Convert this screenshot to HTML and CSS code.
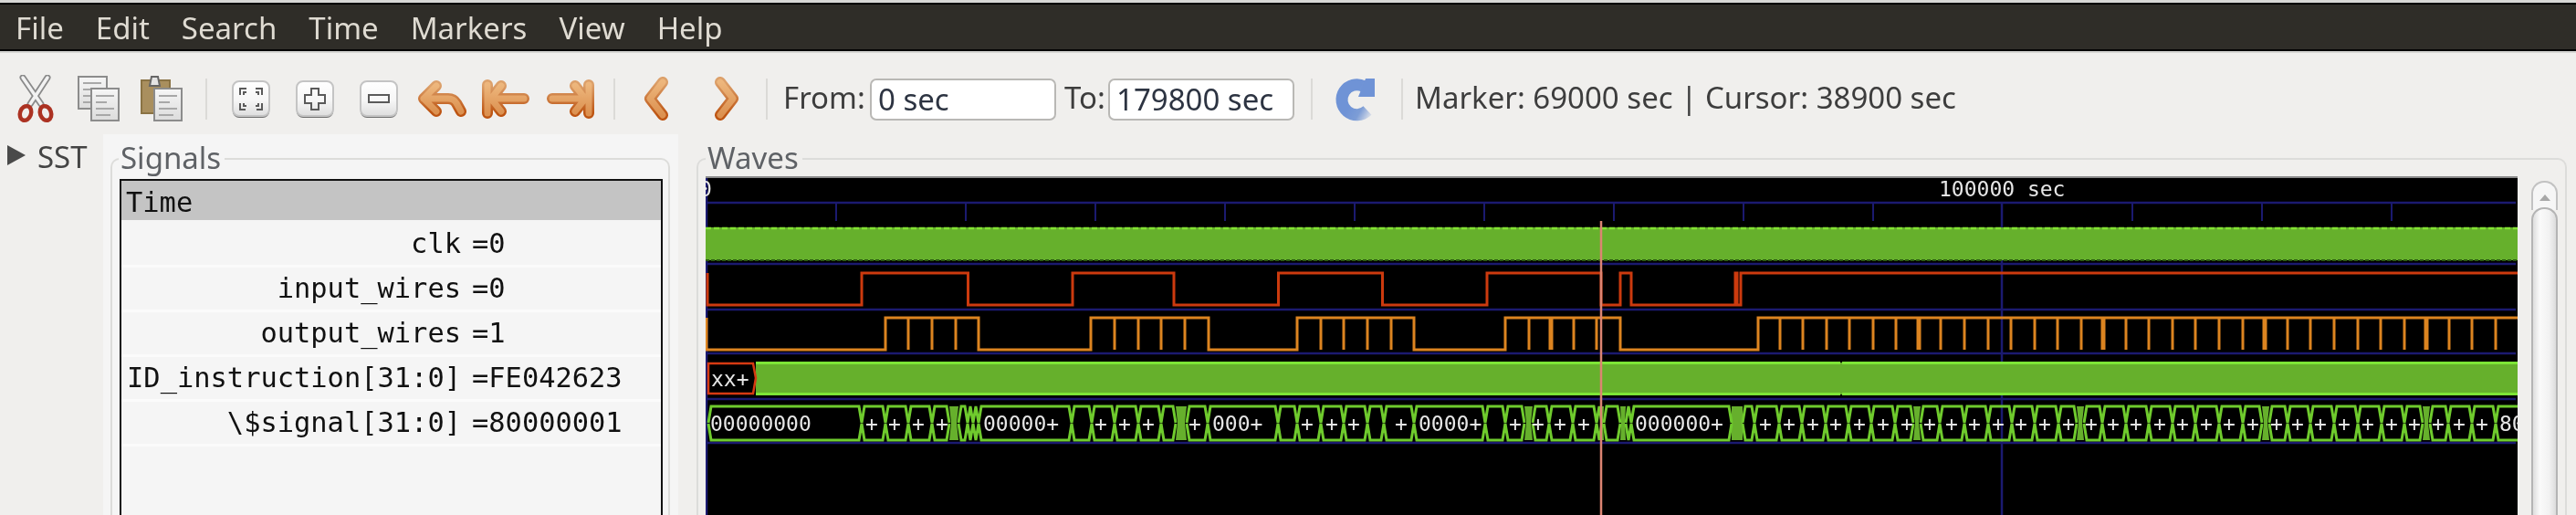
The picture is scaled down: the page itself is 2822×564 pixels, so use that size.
FILE: index.html
```html
<!DOCTYPE html>
<html lang="en">
<head>
<meta charset="utf-8">
<title>GTKWave</title>
<link rel="stylesheet" href="styles.css">
</head>
<body>
<div class="app">
  <nav class="menubar">
    <span>File</span><span>Edit</span><span>Search</span><span>Time</span><span>Markers</span><span>View</span><span>Help</span>
  </nav>

  <svg class="defs" width="0" height="0" aria-hidden="true">
    <defs>
      <linearGradient id="btn" x1="0" y1="0" x2="0" y2="1"><stop offset="0" stop-color="#ffffff"/><stop offset=".55" stop-color="#f6f6f6"/><stop offset="1" stop-color="#dedede"/></linearGradient>
      <linearGradient id="sheet" x1="0" y1="0" x2="0" y2="1"><stop offset="0" stop-color="#f6f6f6"/><stop offset="1" stop-color="#dcdcdc"/></linearGradient>
      <linearGradient id="org" x1="0" y1="0" x2="0" y2="1"><stop offset="0" stop-color="#edb67c"/><stop offset="1" stop-color="#dc9150"/></linearGradient>
      <linearGradient id="orgEdge" x1="0" y1="0" x2="0" y2="1"><stop offset="0" stop-color="#dca06a"/><stop offset="1" stop-color="#bd5412"/></linearGradient>
      <linearGradient id="blue" gradientUnits="userSpaceOnUse" x1="1478" y1="116" x2="1503" y2="130"><stop offset="0" stop-color="#6f93d6"/><stop offset=".45" stop-color="#7d9dd6"/><stop offset="1" stop-color="#f0efed"/></linearGradient>
    </defs>
  </svg>

  <div class="toolbar">
    <span class="tool"><svg width="42" height="53" viewBox="18 81 42 53">
      <path class="blade-o" d="M25,84 L45,113 M52,84 L33,113"/><path class="blade-i" d="M25,84 L45,113 M52,84 L33,113"/>
      <ellipse class="ring" cx="28" cy="123" rx="6" ry="8" transform="rotate(20 28 123)"/><ellipse class="ring" cx="50" cy="123" rx="6" ry="8" transform="rotate(-20 50 123)"/>
    </svg></span>
    <span class="tool"><svg width="48" height="53" viewBox="83 81 48 53">
      <rect class="paper" x="85" y="83" width="31" height="35"/><path class="ruled" d="M90,90H110M90,97H102M90,104H98M90,111H98"/>
      <rect class="paper" x="99" y="96" width="30" height="35"/><path class="ruled" d="M104,104H124M104,111H116M104,118H124M104,125H120"/>
    </svg></span>
    <span class="tool"><svg width="48" height="53" viewBox="153 81 48 53">
      <rect class="board" x="155" y="87" width="31" height="36"/>
      <path class="clip" d="M166,83H173L175,93H164Z"/>
      <rect class="paper" x="169" y="96" width="30" height="35"/><path class="ruled" d="M174,104H194M174,111H186M174,118H194M174,125H190"/>
    </svg></span>
    <span class="sep first"></span>
    <span class="tool wide"><svg width="44" height="44" viewBox="253 86 44 44">
      <rect class="btn-shadow" x="255" y="90" width="40" height="38" rx="7"/><rect class="btn" x="255" y="88" width="40" height="38" rx="7"/>
      <path class="glyph" d="M263,103V96H270M280,96H287V103M263,112V119H269M281,119H287V112M267,103V100H270M283,103V100H280M267,112V115H270M283,112V115H280"/>
    </svg></span>
    <span class="tool wide"><svg width="44" height="44" viewBox="323 86 44 44">
      <rect class="btn-shadow" x="325" y="90" width="40" height="38" rx="7"/><rect class="btn" x="325" y="88" width="40" height="38" rx="7"/>
      <path class="glyph" d="M341,96H349V103H356V112H349V119H341V112H334V103H341Z"/>
    </svg></span>
    <span class="tool wide"><svg width="44" height="44" viewBox="393 86 44 44">
      <rect class="btn-shadow" x="395" y="90" width="40" height="38" rx="7"/><rect class="btn" x="395" y="88" width="40" height="38" rx="7"/>
      <path class="glyph" d="M404,103H426V111H404Z"/>
    </svg></span>
    <span class="tool wide"><svg width="56" height="46" viewBox="457 85 56 46">
      <path class="arr-o" d="M478,93 L464,107 L478,121 M464,107 H491 Q497,107 500,112 L505,121"/><path class="arr-i" d="M478,93 L464,107 L478,121 M464,107 H491 Q497,107 500,112 L505,121"/>
    </svg></span>
    <span class="tool wide"><svg width="56" height="46" viewBox="527 85 56 46">
      <path class="arr-o" d="M534,92V123 M549,93 L538,107 L549,121 M538,107H574"/><path class="arr-i" d="M534,92V123 M549,93 L538,107 L549,121 M538,107H574"/>
    </svg></span>
    <span class="tool wide"><svg width="56" height="46" viewBox="597 85 56 46">
      <path class="arr-o" d="M645,92V123 M630,93 L641,107 L630,121 M641,107H605"/><path class="arr-i" d="M645,92V123 M630,93 L641,107 L630,121 M641,107H605"/>
    </svg></span>
    <span class="sep second"></span>
    <span class="tool nav"><svg width="32" height="50" viewBox="702 83 32 50">
      <path class="arr-o" d="M725,89 L711,107 L725,125"/><path class="arr-i" d="M725,89 L711,107 L725,125"/>
    </svg></span>
    <span class="tool nav"><svg width="32" height="50" viewBox="780 83 32 50">
      <path class="arr-o" d="M789,89 L803,107 L789,125"/><path class="arr-i" d="M789,89 L803,107 L789,125"/>
    </svg></span>
    <span class="sep third"></span>
    <label class="lbl from">From:</label>
    <span class="field">0 sec</span>
    <label class="lbl to">To:</label>
    <span class="field">179800 sec</span>
    <span class="sep fourth"></span>
    <span class="tool reload"><svg width="48" height="50" viewBox="1460 85 48 50">
      <path class="rel-arc" d="M1497,122 A16.500,16.500 0 1 1 1493,95.500"/>
      <path class="rel-head" d="M1495,87 H1505 V107 H1487 Z"/>
    </svg></span>
    <span class="sep fifth"></span>
    <span class="status">Marker: 69000 sec | Cursor: 38900 sec</span>
  </div>

  <main class="main">
    <aside class="sst">
      <svg class="expander" width="22" height="24" viewBox="0 0 22 24"><path d="M1,1 L21,12 L1,23 Z"/></svg>
      <span>SST</span>
    </aside>

    <section class="signals-pane">
      <div class="frame signals-frame">
        <h2 class="frame-title signals-title">Signals</h2>
        <div class="siglist">
          <div class="sighead">Time</div>
          <div class="sigrow"><span class="name">clk</span><span>=0</span></div>
          <div class="sigrow"><span class="name">input_wires</span><span>=0</span></div>
          <div class="sigrow"><span class="name">output_wires</span><span>=1</span></div>
          <div class="sigrow"><span class="name">ID_instruction[31:0]</span><span>=FE042623</span></div>
          <div class="sigrow"><span class="name">\$signal[31:0]</span><span>=80000001</span></div>
        </div>
      </div>
    </section>

    <section class="frame waves-frame">
      <h2 class="frame-title waves-title">Waves</h2>
      <svg class="waves" width="1985" height="369" viewBox="773 195 1985 369">
        <rect class="bg" x="773" y="195" width="1985" height="369"/>
        <path class="grid" d="M773,222H2756M773,289H2756M773,339H2756M773,387H2756M773,437H2756M773,485H2756M774,195V564M2193,222V564"/>
        <path class="ticks" d="M916,222V242M1058,222V242M1200,222V242M1342,222V242M1484,222V242M1626,222V242M1768,222V242M1910,222V242M2052,222V242M2336,222V242M2478,222V242M2620,222V242"/>
        <text class="tlabel" x="773" y="215" text-anchor="middle">0</text>
        <text class="tlabel" x="2124" y="215">100000 sec</text>

        <rect class="clk" x="773" y="249" width="1985" height="36"/>
        <path class="clk-top" d="M773,250H2758"/>
        <path class="clk-bot" d="M773,285H2758"/>

        <path class="red" d="M775,299V334H944V299H1060.500V334H1175V299H1286V334H1400.500V299H1514.500V334H1629V299H1754V334H1775V299H1787V334H1901V299H1903V334H1907V299H2758"/>

        <path class="orange" d="M774,348V383H970V348H1072V383H1195V348H1324V383H1421V348H1549V383H1649V348H1775V383H1926V348H2758"/>
        <path class="orange" d="M995,348V383M1021,348V383M1047,348V383M1221,348V383M1247,348V383M1272,348V383M1298,348V383M1447,348V383M1472,348V383M1498,348V383M1524,348V383M1675,348V383M1724,348V383M1749,348V383M1950,348V383M1975,348V383M2001,348V383M2026,348V383M2052,348V383M2077,348V383M2126,348V383M2152,348V383M2178,348V383M2203,348V383M2229,348V383M2254,348V383M2280,348V383M2329,348V383M2354,348V383M2380,348V383M2405,348V383M2431,348V383M2457,348V383M2506,348V383M2531,348V383M2557,348V383M2583,348V383M2608,348V383M2634,348V383M2683,348V383M2708,348V383M2734,348V383"/>
        <path class="orange thick" d="M1699,348V383M2102,348V383M2304,348V383M2481,348V383M2658,348V383"/>

        <rect class="clk" x="828" y="397" width="1930" height="35"/>
        <path class="instr" d="M828,397.500H2016M2018,397.500H2758M828,431.500H2016M2018,431.500H2758"/>
        <path class="instr-x" d="M776,398H825L828,414L825,431H776Z"/>
        <text class="wtext" x="779" y="423">xx+</text>

        <path class="bus-fill" d="M1040,445H1050L1048,463L1050,482H1040L1042,463ZM1288,445H1300L1298,463L1300,482H1288L1290,463ZM1670,445H1679L1677,463L1679,482H1670L1672,463ZM1752,445H1757L1756,463L1757,482H1752L1753,463ZM1775,445H1781L1780,463L1781,482H1775L1776,463ZM1897,445H1909V482H1897ZM2096,445H2104L2102,463L2104,482H2096L2098,463ZM2275,445H2283L2281,463L2283,482H2275L2277,463ZM2478,445H2486L2484,463L2486,482H2478L2480,463ZM2654,445H2662L2660,463L2662,482H2654L2656,463Z"/>
        <path id="bustop" class="bus" d="M776,463l3,-18H941l3,18 3,-18H967l3,18 3,-18H992l3,18 3,-18H1018l3,18 3,-18H1037l3,18M1050,463l3,-18H1057l3,18 3,-18l3,18 3,-18l3,18 3,-18H1171l3,18 3,-18H1193l3,18 3,-18H1218l3,18 3,-18H1244l3,18 3,-18H1269l3,18 3,-18H1285l3,18M1300,463l3,-18H1320l3,18 3,-18H1397l3,18 3,-18H1418l3,18 3,-18H1444l3,18 3,-18H1469l3,18 3,-18H1495l3,18 3,-18H1513l3,18 3,-18H1546l3,18 3,-18H1624l3,18 3,-18H1646l3,18 3,-18H1667l3,18M1679,463l3,-18H1694l3,18 3,-18H1720l3,18 3,-18H1746l3,18 3,-18l3,18M1757,463l3,-18H1772l3,18M1781,463l3,-18 3,18 3,-18H1894l3,18M1909,463l3,-18H1919l3,18 3,-18H1946l3,18 3,-18H1971l3,18 3,-18H1997l3,18 3,-18H2022l3,18 3,-18H2047l3,18 3,-18H2073l3,18 3,-18H2093l3,18M2104,463l3,-18H2122l3,18 3,-18H2149l3,18 3,-18H2175l3,18 3,-18H2201l3,18 3,-18H2226l3,18 3,-18H2252l3,18 3,-18H2272l3,18M2283,463l3,-18H2300l3,18 3,-18H2326l3,18 3,-18H2351l3,18 3,-18H2377l3,18 3,-18H2402l3,18 3,-18H2428l3,18 3,-18H2454l3,18 3,-18H2475l3,18M2486,463l3,-18H2503l3,18 3,-18H2528l3,18 3,-18H2554l3,18 3,-18H2580l3,18 3,-18H2606l3,18 3,-18H2631l3,18 3,-18H2651l3,18M2662,463l3,-18H2679l3,18 3,-18H2705l3,18 3,-18H2731l3,18 3,-18H2760"/>
        <use href="#bustop" transform="translate(0,927) scale(1,-1)"/>

        <text class="wtext" x="778" y="472">00000000</text>
        <text class="wtext plus" y="472" x="955 980 1006 1032">++++</text>
        <text class="wtext" x="1077" y="472">00000+</text>
        <text class="wtext plus" y="472" x="1206 1232 1258 1309">++++</text>
        <text class="wtext" x="1328" y="472">000+</text>
        <text class="wtext plus" y="472" x="1432 1459 1483 1535">++++</text>
        <text class="wtext" x="1554" y="472">0000+</text>
        <text class="wtext plus" y="472" x="1660 1685 1709 1735">++++</text>
        <text class="wtext" x="1791" y="472">000000+</text>
        <text class="wtext plus" y="472" x="1934 1960 1986 2011 2037 2063 2089 2114 2138 2163 2189 2214 2240 2266 2291 2315 2340 2366 2391 2417 2442 2468 2494 2517 2542 2568 2594 2620 2645 2671 2694 2719">++++++++++++++++++++++++++++++++</text>
        <text class="wtext" x="2738" y="472">80</text>

        <path class="cursor" d="M1754,242V564"/>
      </svg>
      <div class="scrollbar">
        <div class="sb-btn"><span class="sb-arrow"></span></div>
        <div class="sb-thumb"></div>
      </div>
    </section>
  </main>
</div>
</body>
</html>
```
FILE: styles.css
```css
* { box-sizing: border-box; }
html, body { margin: 0; padding: 0; }
body {
  width: 2822px;
  height: 564px;
  overflow: hidden;
  background: #f0efed;
  font-family: "Noto Sans", "Liberation Sans", sans-serif;
}
.app {
  width: 2822px;
  height: 564px;
  padding-top: 3px;
  background: linear-gradient(#d8d8d6 0 3px, #f0efed 3px);
  filter: blur(0.6px);
  display: flex;
  flex-direction: column;
}
.defs { position: absolute; }

/* menu */
.menubar {
  height: 53px;
  flex: none;
  display: flex;
  align-items: center;
  gap: 35px;
  padding: 2px 0 0 17px;
  background: #2f2d28;
  border-top: 2px solid #000;
  border-bottom: 2px solid #000;
  color: #dfdbd2;
  font-size: 33px;
  line-height: 1;
}

/* toolbar */
.toolbar {
  height: 91px;
  flex: none;
  display: flex;
  align-items: center;
  padding: 12px 0 0 4px;
  border-top: 2px solid #d6d6d4;
  color: #3d3d3d;
  font-size: 33px;
}
.tool { width: 69px; flex: none; display: flex; justify-content: center; align-items: center; }
.tool.wide { width: 70px; }
.tool.nav { width: 77px; }
.tool.reload { width: 46px; margin-left: 24px; }
.tool svg { display: block; flex: none; }
.sep { width: 2px; height: 45px; flex: none; background: #dbdad7; }
.sep.first { margin: 0 13px 0 14px; }
.sep.second { margin: 0 6px 0 12px; }
.sep.third { margin: 0 0 0 5px; }
.sep.fourth { margin-left: 18px; }
.sep.fifth { margin-left: 27px; }
.lbl { flex: none; white-space: nowrap; margin-top: -4px; }
.lbl.from { width: 95px; margin-left: 17px; }
.lbl.to { width: 48px; margin-left: 9px; }
.field {
  width: 204px;
  height: 46px;
  flex: none;
  padding: 1px 0 0 7px;
  background: #fff;
  border: 2px solid #b9b8b5;
  border-radius: 7px;
  color: #2d3442;
  line-height: 40px;
  white-space: nowrap;
}
.status { margin: -4px 0 0 13px; white-space: nowrap; }

.blade-o { fill: none; stroke: #8a8a8a; stroke-width: 7; stroke-linecap: round; }
.blade-i { fill: none; stroke: #f2f2f2; stroke-width: 3.500; stroke-linecap: round; }
.ring { fill: none; stroke: #ac3222; stroke-width: 4.500; }
.paper { fill: url(#sheet); stroke: #8c8c8c; stroke-width: 2; }
.ruled { fill: none; stroke: #a8a8a8; stroke-width: 2; }
.board { fill: #a98f5e; stroke: #8a7344; stroke-width: 2; }
.clip { fill: #e4e4e4; stroke: #666; stroke-width: 2; }
.btn-shadow { fill: #6f6f6f; }
.btn { fill: url(#btn); stroke: #c4c4c4; stroke-width: 2; }
.glyph { fill: none; stroke: #5a5a5a; stroke-width: 2; }
.arr-o { fill: none; stroke: url(#orgEdge); stroke-width: 12; stroke-linecap: round; stroke-linejoin: round; }
.arr-i { fill: none; stroke: url(#org); stroke-width: 7; stroke-linecap: round; stroke-linejoin: round; }
.rel-arc { fill: none; stroke: url(#blue); stroke-width: 13; }
.rel-head { fill: #6f93d6; }

/* main */
.main { flex: 1; min-height: 0; display: flex; overflow: hidden; }
.sst {
  width: 113px;
  flex: none;
  display: flex;
  align-items: flex-start;
  padding: 11px 0 0 7px;
  color: #444;
  font-size: 33px;
  line-height: 34px;
}
.expander { flex: none; fill: #4a4a4a; }
.sst span { margin: -3px 0 0 12px; }
.signals-pane {
  width: 630px;
  flex: none;
  padding: 26px 0 0 8px;
  background: #f5f5f5;
}
.frame {
  position: relative;
  border: 2px solid #dcdcda;
  border-bottom: 0;
  border-radius: 10px 10px 0 0;
  height: 420px;
}
.frame-title {
  position: absolute;
  top: -19px;
  margin: 0;
  padding: 0 4px 0 2px;
  font-size: 33px;
  font-weight: 400;
  line-height: 34px;
  color: #5f6266;
}
.signals-frame { width: 613px; padding: 21px 6px 0 8px; }
.signals-title { left: 7px; background: #f5f5f5; }
.waves-frame {
  width: 2049px;
  flex: none;
  margin: 26px 0 0 20px;
  display: flex;
  align-items: flex-start;
  padding: 20px 0 0 8px;
}
.waves-title { left: 8px; background: #f0efed; }

.siglist {
  height: 400px;
  border: 2px solid #111;
  border-bottom: 0;
  font-family: "DejaVu Sans Mono", "Liberation Mono", monospace;
  font-size: 30.400px;
  color: #111;
}
.sighead {
  height: 43px;
  padding-left: 5px;
  background: #c4c4c4;
  line-height: 47px;
  margin-bottom: 3px;
}
.sigrow {
  display: grid;
  grid-template-columns: 366px auto;
  column-gap: 12px;
  height: 49px;
  padding-left: 6px;
  border-bottom: 3px solid #fbfbfb;
  line-height: 46px;
}
.name { text-align: right; white-space: nowrap; }

/* waves */
.waves { display: block; flex: none; box-shadow: 0 -2px 0 #8a8a8a; }
.bg { fill: #000; }
.grid { fill: none; stroke: #1b1a70; stroke-width: 2.500; }
.ticks { fill: none; stroke: #1b1a70; stroke-width: 2; }
.tlabel, .wtext { font-family: "DejaVu Sans Mono", "Liberation Mono", monospace; font-size: 23px; fill: #e6e6e6; }
.plus { text-anchor: middle; }
.clk { fill: #66b02c; }
.clk-top { fill: none; stroke: #82e232; stroke-width: 2.500; stroke-dasharray: 6 3; }
.clk-bot { fill: none; stroke: #2c5c12; stroke-width: 2; stroke-dasharray: 4 2; }
.red { fill: none; stroke: #cc3a0e; stroke-width: 3; }
.orange { fill: none; stroke: #dc8420; stroke-width: 3; }
.orange.thick { stroke-width: 5; }
.instr { fill: none; stroke: #7de536; stroke-width: 3; }
.instr-x { fill: #000; stroke: #d63a12; stroke-width: 2.500; }
.bus { fill: none; stroke: #6fcb2d; stroke-width: 3; }
.bus-fill { fill: #66b02c; }
.cursor { fill: none; stroke: #dc8472; stroke-width: 2.500; }

.scrollbar { width: 29px; flex: none; margin-left: 15px; padding-top: 3px; }
.sb-btn {
  height: 32px;
  display: flex;
  justify-content: center;
  padding-top: 13px;
  background: #f6f6f6;
  border: 2px solid #c2c2c2;
  border-bottom: 0;
  border-radius: 14px 14px 0 0;
}
.sb-arrow {
  width: 0;
  height: 0;
  border-left: 6px solid transparent;
  border-right: 6px solid transparent;
  border-bottom: 7px solid #a8a8a8;
}
.sb-thumb {
  height: 340px;
  background: linear-gradient(90deg, #dedede, #fafafa 30%, #f2f2f2 70%, #dcdcdc);
  border: 2px solid #b4b4b4;
  border-bottom: 0;
  border-radius: 14px 14px 0 0;
  margin-top: -3px;
}
```
